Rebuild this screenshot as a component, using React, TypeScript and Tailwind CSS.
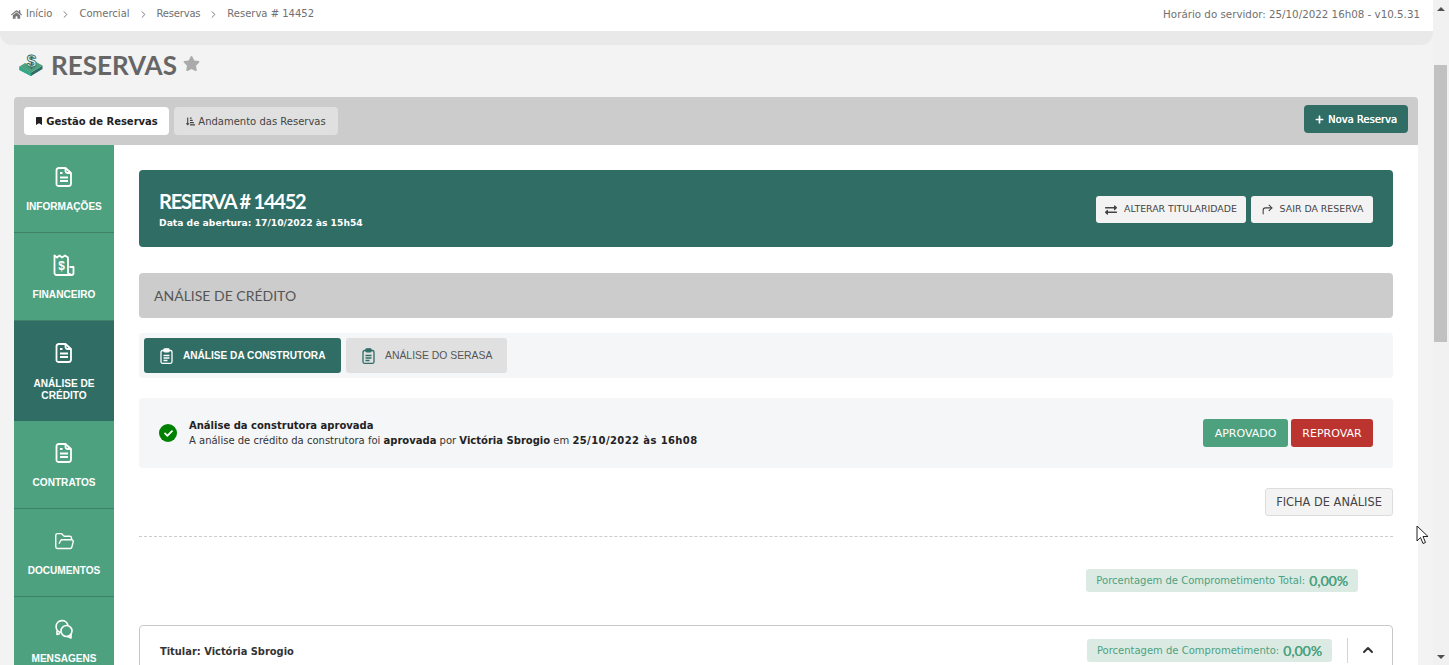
import { ChevronRight, ChevronUp, CornerUpRight, FolderOpen } from "lucide-react"
import { FaBookmark, FaCheck, FaExchangeAlt, FaHome, FaPlus, FaSortAmountDownAlt, FaStar } from "react-icons/fa"
import type { ReactNode } from "react"

const verdana = "font-['DejaVu_Sans',sans-serif]"
const lato = "font-['Lato',sans-serif]"
const arial = "font-['Liberation_Sans',Arial,sans-serif]"

function DocIcon() {
  return (
    <svg width="18" height="20" viewBox="0 0 18 20" fill="none" stroke="currentColor" strokeWidth="1.8" strokeLinejoin="round">
      <path d="M3.500 1h7l5.500 5v10.500a2.500 2.500 0 0 1-2.500 2.500h-10a2 2 0 0 1-2-2.500v-13a2.500 2.500 0 0 1 2-2.500z" />
      <path d="M10.500 1v3a2 2 0 0 0 2 2h3" />
      <path d="M5 6h2.500M5 10.500h8M5 14h8" />
    </svg>
  )
}

function ReceiptIcon() {
  return (
    <svg width="22" height="22" viewBox="0 0 22 22" fill="none" stroke="currentColor" strokeWidth="1.800" strokeLinejoin="round">
      <path d="M1.500 1.500l2.500 2 2.500-2 2.500 2 3-2 3 2v15a2.500 2.500 0 0 0 2 2.500h-13.500a2 2 0 0 1-2-2z" />
      <path d="M16.500 13h4v6a2 2 0 0 1-4 0" />
      <text x="8.500" y="15.500" textAnchor="middle" fontSize="12" fontWeight="700" fill="currentColor" stroke="none" fontFamily="Liberation Sans">$</text>
    </svg>
  )
}

function ChatIcon() {
  return (
    <svg width="20" height="20" viewBox="0 0 20 20" fill="none" stroke="currentColor" strokeWidth="1.600" strokeLinejoin="round">
      <path d="M7 13.500a6 6 0 1 1 7-7" />
      <path d="M3 11.500v4l3-1" />
      <circle cx="12.500" cy="12" r="5.500" />
      <path d="M17 15v4l-3.500-1.500" />
    </svg>
  )
}

function ClipIcon({ className }: { className?: string }) {
  return (
    <svg className={className} width="13" height="16" viewBox="0 0 13 16" fill="none" stroke="currentColor" strokeWidth="1.300" strokeLinejoin="round">
      <rect x="1" y="2.500" width="11" height="12.800" rx="1.500" />
      <rect x="4" y="0.800" width="5" height="3" rx="0.800" fill="currentColor" />
      <path d="M3.500 7.500h6M3.500 10h6M3.500 12.500h4" />
    </svg>
  )
}

function LogoIcon() {
  return (
    <svg width="24" height="24" viewBox="0 0 24 24">
      <path d="M0.500 14.500l11.500 6 11.500-7v3.500l-11.500 7-11.500-6z" fill="#2f6d65" />
      <path d="M0.500 14.500l11.500 6v3.500l-11.500-6z" fill="#35a98b" />
      <path d="M0.500 14.500l5.500-3.500 6 3 5-4 6.500 3.500-11.500 7z" fill="#4ea17f" />
      <text x="12.500" y="15" textAnchor="middle" fontSize="17" fontWeight="700" fill="#f3f3f3" stroke="#2f6d65" strokeWidth="0.900" fontFamily="Liberation Sans">$</text>
    </svg>
  )
}

function SideItem({ icon, label, active, last }: { icon: ReactNode; label: ReactNode; active?: boolean; last?: boolean }) {
  return (
    <div
      className={`flex flex-col items-center pt-[20px] text-white ${arial} ${active ? "bg-[#2f6d65] pb-[19px]" : "bg-[#4ea17f]"} ${
        !active && !last ? "border-b border-[#3d8269] h-[88px]" : ""
      }`}
    >
      <div className="flex h-[24px] items-center justify-center">{icon}</div>
      <div className={`${active ? "mt-[13px]" : "mt-[12px]"} text-center text-[10.100px] leading-[12px] font-bold`}>{label}</div>
    </div>
  )
}

function Badge({ label, value }: { label: string; value: string }) {
  return (
    <div className="flex h-[23px] items-center rounded-[3px] bg-[#dbebe4] px-[10px] text-[#4ea17f]">
      <span className={`${verdana} text-[10px]`}>{label}</span>
      <span className={`${lato} ml-[4px] text-[14px] font-medium [text-shadow:0.2px_0_0_currentColor]`}>{value}</span>
    </div>
  )
}

export default function App() {
  return (
    <div className={`flex h-[665px] w-[1449px] overflow-hidden bg-[#f3f3f3] ${verdana}`}>
      <div className="w-[1433px] shrink-0">
        <div className="rounded-b-[12px] bg-[#e9e9e9]">
          <div className="flex h-[31px] items-start justify-between bg-white pt-[8px] pr-[13px] pl-[11px] leading-[12px] text-[#6f6f6f]">
            <div className="flex items-center text-[10px]">
              <FaHome className="mr-[4px] text-[11px] text-[#777]" />
              <span>Início</span>
              <ChevronRight size={11} className="mx-[8px]" />
              <span>Comercial</span>
              <ChevronRight size={11} className="mx-[8px]" />
              <span className="tracking-[-0.2px]">Reservas</span>
              <ChevronRight size={11} className="mx-[8px]" />
              <span>Reserva # 14452</span>
            </div>
            <div className="text-[10.300px]">Horário do servidor: 25/10/2022 16h08 - v10.5.31</div>
          </div>
          <div className="h-[14px]" />
        </div>

        <div className="flex h-[52px] items-start pt-[7px] pl-[19px]">
          <LogoIcon />
          <span className={`${lato} ml-[8px] -mt-[1px] text-[26px] leading-[28px] font-bold text-[#666]`}>RESERVAS</span>
          <FaStar className="mt-[3px] ml-[6px] text-[17px] text-[#aaa]" />
        </div>

        <div className="ml-[14px] w-[1404px]">
          <div className="flex h-[48px] items-start justify-between rounded-t-[4px] bg-[#cccccc] pt-[10px] pr-[10px] pl-[10px]">
            <div className="flex gap-[5px]">
              <div className="flex h-[28px] w-[145px] items-center justify-center rounded-[4px] bg-white text-[10px] font-bold text-[#222]">
                <FaBookmark className="mr-[3px] text-[8px]" />
                Gestão de Reservas
              </div>
              <div className="flex h-[28px] w-[164px] items-center justify-center rounded-[4px] bg-[#e0e0e0] text-[10px] text-[#444]">
                <FaSortAmountDownAlt className="mr-[3px] text-[9px]" />
                Andamento das Reservas
              </div>
            </div>
            <div className="-mt-[2px] flex h-[28px] w-[104px] items-center justify-center rounded-[4px] bg-[#2f6d65] text-[10px] text-white [text-shadow:0.3px_0_0_currentColor]">
              <FaPlus className="mr-[4px] text-[9px]" />
              Nova Reserva
            </div>
          </div>

          <div className="flex h-[520px] overflow-hidden bg-white">
            <div className="w-[100px] shrink-0">
              <SideItem icon={<DocIcon />} label="INFORMAÇÕES" />
              <SideItem icon={<ReceiptIcon />} label="FINANCEIRO" />
              <SideItem icon={<DocIcon />} label={<>ANÁLISE DE<br />CRÉDITO</>} active />
              <SideItem icon={<DocIcon />} label="CONTRATOS" />
              <SideItem icon={<FolderOpen size={21} strokeWidth={1.6} />} label="DOCUMENTOS" />
              <SideItem icon={<ChatIcon />} label="MENSAGENS" last />
            </div>

            <div className="flex-1 px-[25px] pt-[25px]">
              <div className="flex h-[77px] items-center justify-between rounded-[4px] bg-[#2f6d65] px-[20px] text-white">
                <div className="pt-[1px]">
                  <div className={`${lato} text-[20px] leading-[24px] font-bold tracking-[-1.2px]`}>RESERVA # 14452</div>
                  <div className="mt-[3px] text-[9.200px] leading-[14px] font-bold">Data de abertura: 17/10/2022 às 15h54</div>
                </div>
                <div className="mt-[2px] flex gap-[5px] text-[9.400px] text-[#444]">
                  <div className="flex h-[27px] w-[150px] items-center justify-center rounded-[3px] bg-[#f3f3f3]">
                    <FaExchangeAlt className="mr-[7px] text-[12px]" />
                    ALTERAR TITULARIDADE
                  </div>
                  <div className="flex h-[27px] w-[122px] items-center justify-center rounded-[3px] bg-[#f3f3f3]">
                    <CornerUpRight size={13} strokeWidth={2} className="mr-[6px]" />
                    SAIR DA RESERVA
                  </div>
                </div>
              </div>

              <div className={`${lato} mt-[26px] flex h-[45px] items-center rounded-[4px] bg-[#cccccc] px-[15px] text-[14px] text-[#555]`}>
                ANÁLISE DE CRÉDITO
              </div>

              <div className="mt-[15px] flex h-[45px] items-center gap-[5px] rounded-[4px] bg-[#f5f6f8] px-[5px]">
                <div className={`${arial} flex h-[35px] w-[197px] items-center rounded-[3px] bg-[#2f6d65] pt-[1px] pl-[16px] text-[10.100px] font-bold text-white`}>
                  <ClipIcon className="mr-[10px] -mt-[1px]" />
                  ANÁLISE DA CONSTRUTORA
                </div>
                <div className={`${arial} flex h-[35px] w-[161px] items-center rounded-[3px] bg-[#e0e0e0] pt-[1px] pl-[16px] text-[10.400px] text-[#555]`}>
                  <ClipIcon className="mr-[10px] -mt-[1px] text-[#2f6d65]" />
                  ANÁLISE DO SERASA
                </div>
              </div>

              <div className="mt-[20px] flex h-[70px] items-center justify-between rounded-[4px] bg-[#f5f6f8] px-[20px]">
                <div className="flex items-center">
                  <div className="mr-[12px] flex h-[18px] w-[18px] items-center justify-center rounded-full bg-[#008000] text-white">
                    <FaCheck className="text-[9px]" />
                  </div>
                  <div className="text-[10px] leading-[15px] text-[#333]">
                    <div className="font-bold text-[#222]">Análise da construtora aprovada</div>
                    <div>
                      A análise de crédito da construtora foi <b className="text-[#222]">aprovada</b> por <b className="text-[#222]">Victória Sbrogio</b> em <b className="tracking-[0.4px] text-[#222]">25/10/2022 às 16h08</b>
                    </div>
                  </div>
                </div>
                <div className="flex gap-[3px] text-[11px] text-white">
                  <div className="flex h-[28px] w-[85px] items-center justify-center rounded-[3px] bg-[#4ea17f] pt-[2px]">APROVADO</div>
                  <div className="flex h-[28px] w-[82px] items-center justify-center rounded-[3px] bg-[#bb342f] pt-[2px]">REPROVAR</div>
                </div>
              </div>

              <div className="mt-[20px] flex justify-end">
                <div className="flex h-[28px] w-[128px] items-center justify-center rounded-[3px] border border-[#dddddd] bg-[#f3f3f3] pt-[1px] text-[11.400px] text-[#444]">
                  FICHA DE ANÁLISE
                </div>
              </div>

              <div className="mt-[20px] border-t border-dashed border-[#cccccc]" />

              <div className="mt-[32px] flex justify-end pr-[35px]">
                <Badge label="Porcentagem de Comprometimento Total:" value="0,00%" />
              </div>

              <div className="mt-[33px] flex h-[60px] items-start justify-between rounded-t-[4px] border border-[#c8c8c8] pt-[12px] pl-[20px]">
                <div className="pt-[7px] text-[9.900px] leading-[14px] font-bold text-[#333]">Titular: Victória Sbrogio</div>
                <div className="flex items-center">
                  <Badge label="Porcentagem de Comprometimento:" value="0,00%" />
                  <div className="ml-[15px] flex h-[25px] w-[45px] items-center justify-center border-l border-[#d5d5d5] pr-[4px] pb-[2px] text-[#333]">
                    <ChevronUp size={16} strokeWidth={3} />
                  </div>
                </div>
              </div>
            </div>
          </div>
        </div>
      </div>

      <div className="relative w-[16px] shrink-0 bg-[#f1f1f1]">
        <div className="flex h-[17px] items-center justify-center pt-[1px] text-[#505050]">
          <div className="h-0 w-0 border-x-[4px] border-b-[4px] border-x-transparent border-b-current" />
        </div>
        <div className="mx-[1px] mt-[48px] h-[277px] w-[13px] bg-[#c1c1c1]" />
        <div className="absolute right-0 bottom-0 flex h-[17px] w-full items-center justify-center text-[#505050]">
          <div className="h-0 w-0 border-x-[4px] border-t-[4px] border-x-transparent border-t-current" />
        </div>
      </div>

      <svg className="absolute top-[525px] left-[1416px]" width="13" height="20" viewBox="0 0 13 20">
        <path d="M1 1v15l3.500-3.500 2.500 6 2.500-1-2.500-6h5z" fill="#fff" stroke="#222" strokeWidth="1" />
      </svg>
    </div>
  )
}
